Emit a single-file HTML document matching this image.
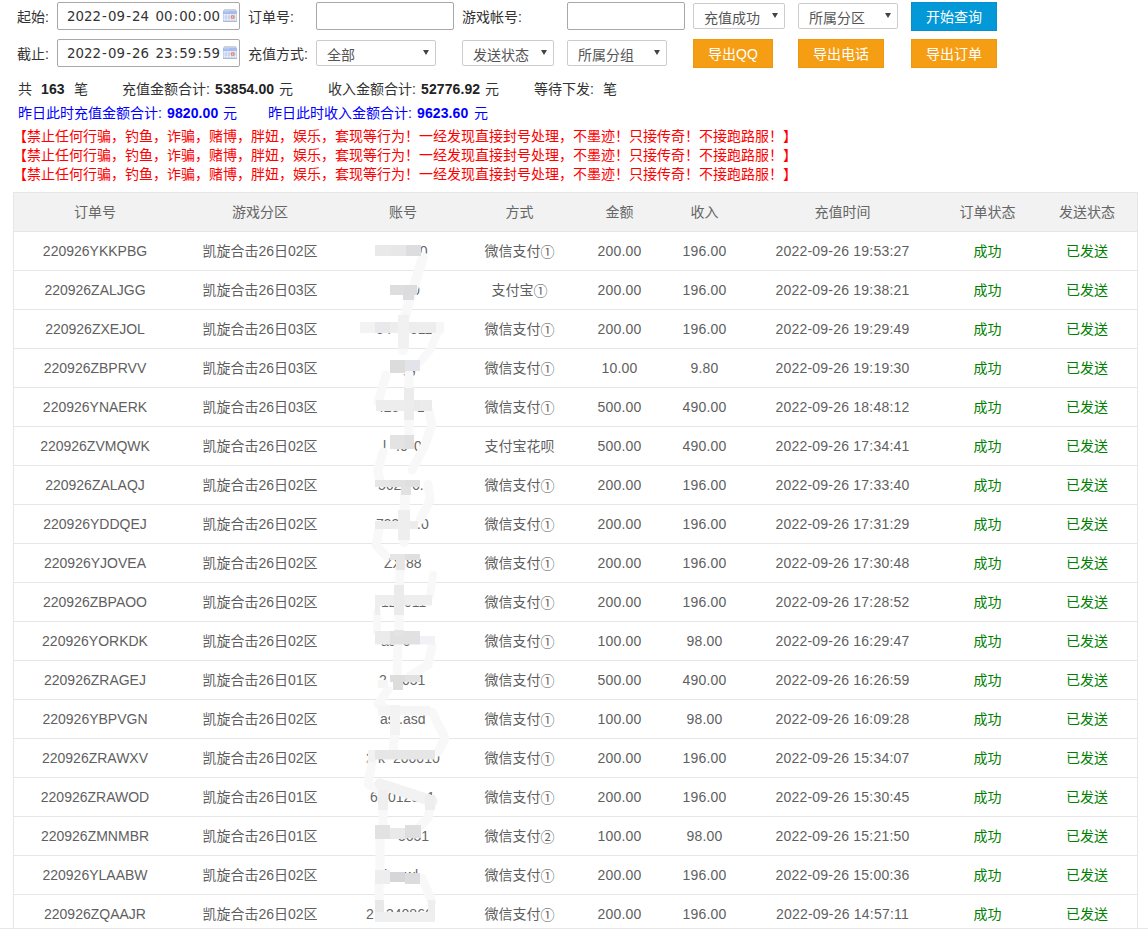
<!DOCTYPE html>
<html lang="zh-CN">
<head>
<meta charset="utf-8">
<title>充值订单</title>
<style>
*{box-sizing:border-box}
html,body{margin:0;padding:0;background:#fff}
body{width:1148px;height:938px;position:relative;overflow:hidden;font-family:"Liberation Sans","Noto Sans CJK SC",sans-serif;font-size:14px;color:#333}
.abs{position:absolute;white-space:nowrap}
.lb{position:absolute;white-space:nowrap;height:28px;line-height:30px;color:#333}
.inp{position:absolute;height:28px;border:1px solid #a9a7a7;border-radius:2px;background:#fff;font-family:"DejaVu Sans","Liberation Sans",sans-serif;font-size:13.33px;line-height:26px;padding-top:1px;padding-left:9px;color:#333;white-space:nowrap}
.inp u{text-decoration:none;padding:0 1.15px;white-space:pre}
.inp .cal{position:absolute;left:165px;top:6px}
.sel{position:absolute;height:26px;border:1px solid #ccc;border-radius:2px;background:#fff;line-height:29px;padding-left:10px;overflow:hidden;color:#555;white-space:nowrap}
.sel i{position:absolute;right:6px;top:9px;width:0;height:0;border-left:3px solid transparent;border-right:3px solid transparent;border-top:5.5px solid #444}
.btn{position:absolute;height:29px;line-height:28px;text-align:center;color:#fff;white-space:nowrap}
.or{background:#f59d13;border:1px solid #ef970f}
.bl{background:#0399d9;border:1px solid #068fcc}
.sum{position:absolute;left:13px;white-space:nowrap;height:20px;line-height:20px}
.sum span{position:absolute;top:0}
.red{color:#f00}
.blue{color:#00f}
b{font-weight:bold;color:#222;letter-spacing:.1px}
.blue b{color:#00f}
#tw{position:absolute;left:13px;top:192px;width:1125px;height:737px;border:1px solid #e6e6e6;border-bottom:none;overflow:hidden}
#hr{position:absolute;left:0;top:928px;width:1148px;height:1px;background:#e6e6e6}
table{border-collapse:separate;border-spacing:0;table-layout:fixed;width:1123px;color:#5f5f5f}
th,td{height:39px;padding:0;text-align:center;font-weight:normal;border-bottom:1px solid #e6e6e6;white-space:nowrap;overflow:hidden;line-height:38px}
th{background:#f2f2f2;color:#666}
td.g{color:#008000}
td.dt{letter-spacing:.22px}
td.n{letter-spacing:.2px}
td i{font-style:normal;position:relative;top:1px}
</style>
</head>
<body>
<div class="lb" style="left:17px;top:2px">起始:</div>
<div class="inp" style="left:57px;top:2px;width:183px">2022<u>-</u>09<u>-</u>24<u> </u>00<u>:</u>00<u>:</u>00<svg class="cal" width="14" height="13" viewBox="0 0 14 13"><rect x="1" y="0" width="12" height="1.6" fill="#d0d1d4"/><rect x="0" y="1.5" width="14" height="3.8" fill="#a5bcef"/><rect x="1" y="2" width="5" height="1.2" fill="#b9cbf3"/><rect x="0" y="5" width="14" height="7.2" fill="#c3d3f0"/><rect x="0" y="11.8" width="14" height="1.2" fill="#adbccf"/><g fill="#fff" opacity=".45"><rect x="1" y="5.3" width="12" height="1.1"/><rect x="1" y="10.3" width="12" height="1.1"/><rect x="1.2" y="6.4" width="1.1" height="3.9"/><rect x="4" y="6.4" width="1.1" height="3.9"/><rect x="6.8" y="6.4" width="1.1" height="3.9"/><rect x="12" y="6.4" width="1.1" height="3.9"/></g><g fill="#fff" opacity=".85"><rect x="1.2" y="5.3" width="1.1" height="1.1"/><rect x="4.0" y="5.3" width="1.1" height="1.1"/><rect x="6.8" y="5.3" width="1.1" height="1.1"/><rect x="9.6" y="5.3" width="1.1" height="1.1"/><rect x="12.0" y="5.3" width="1.1" height="1.1"/><rect x="1.2" y="10.3" width="1.1" height="1.1"/><rect x="4.0" y="10.3" width="1.1" height="1.1"/><rect x="6.8" y="10.3" width="1.1" height="1.1"/><rect x="9.6" y="10.3" width="1.1" height="1.1"/><rect x="12.0" y="10.3" width="1.1" height="1.1"/></g><circle cx="9.7" cy="7.9" r="1.95" fill="#e8856a"/><rect x="9.4" y="6.8" width=".7" height="2.2" fill="#fbe3da"/></svg></div>
<div class="lb" style="left:248px;top:2px">订单号:</div>
<div class="inp" style="left:316px;top:2px;width:138px"></div>
<div class="lb" style="left:462px;top:2px">游戏帐号:</div>
<div class="inp" style="left:567px;top:2px;width:118px"></div>
<div class="sel" style="left:693px;top:3px;width:92px">充值成功<i></i></div>
<div class="sel" style="left:798px;top:3px;width:100px">所属分区<i></i></div>
<div class="btn bl" style="left:911px;top:2px;width:86px">开始查询</div>

<div class="lb" style="left:17px;top:39px">截止:</div>
<div class="inp" style="left:57px;top:39px;width:183px">2022<u>-</u>09<u>-</u>26<u> </u>23<u>:</u>59<u>:</u>59<svg class="cal" width="14" height="13" viewBox="0 0 14 13"><rect x="1" y="0" width="12" height="1.6" fill="#d0d1d4"/><rect x="0" y="1.5" width="14" height="3.8" fill="#a5bcef"/><rect x="1" y="2" width="5" height="1.2" fill="#b9cbf3"/><rect x="0" y="5" width="14" height="7.2" fill="#c3d3f0"/><rect x="0" y="11.8" width="14" height="1.2" fill="#adbccf"/><g fill="#fff" opacity=".45"><rect x="1" y="5.3" width="12" height="1.1"/><rect x="1" y="10.3" width="12" height="1.1"/><rect x="1.2" y="6.4" width="1.1" height="3.9"/><rect x="4" y="6.4" width="1.1" height="3.9"/><rect x="6.8" y="6.4" width="1.1" height="3.9"/><rect x="12" y="6.4" width="1.1" height="3.9"/></g><g fill="#fff" opacity=".85"><rect x="1.2" y="5.3" width="1.1" height="1.1"/><rect x="4.0" y="5.3" width="1.1" height="1.1"/><rect x="6.8" y="5.3" width="1.1" height="1.1"/><rect x="9.6" y="5.3" width="1.1" height="1.1"/><rect x="12.0" y="5.3" width="1.1" height="1.1"/><rect x="1.2" y="10.3" width="1.1" height="1.1"/><rect x="4.0" y="10.3" width="1.1" height="1.1"/><rect x="6.8" y="10.3" width="1.1" height="1.1"/><rect x="9.6" y="10.3" width="1.1" height="1.1"/><rect x="12.0" y="10.3" width="1.1" height="1.1"/></g><circle cx="9.7" cy="7.9" r="1.95" fill="#e8856a"/><rect x="9.4" y="6.8" width=".7" height="2.2" fill="#fbe3da"/></svg></div>
<div class="lb" style="left:248px;top:39px">充值方式:</div>
<div class="sel" style="left:316px;top:40px;width:120px">全部<i></i></div>
<div class="sel" style="left:462px;top:40px;width:92px">发送状态<i></i></div>
<div class="sel" style="left:567px;top:40px;width:100px">所属分组<i></i></div>
<div class="btn or" style="left:693px;top:39px;width:80px">导出QQ</div>
<div class="btn or" style="left:798px;top:39px;width:86px">导出电话</div>
<div class="btn or" style="left:911px;top:39px;width:86px">导出订单</div>

<div class="sum" style="top:79px"><span style="left:5px">共</span><span style="left:28px"><b>163</b></span><span style="left:61px">笔</span><span style="left:109px">充值金额合计:</span><span style="left:202px"><b>53854.00</b></span><span style="left:266px">元</span><span style="left:315px">收入金额合计:</span><span style="left:408px"><b>52776.92</b></span><span style="left:472px">元</span><span style="left:521px">等待下发:</span><span style="left:590px">笔</span></div>
<div class="sum blue" style="top:103px"><span style="left:5px">昨日此时充值金额合计:</span><span style="left:154px"><b>9820.00</b></span><span style="left:210px">元</span><span style="left:255px">昨日此时收入金额合计:</span><span style="left:404px"><b>9623.60</b></span><span style="left:461px">元</span></div>
<div class="sum red" style="top:126px">【禁止任何行骗，钓鱼，诈骗，赌博，胖妞，娱乐，套现等行为！一经发现直接封号处理，不墨迹！只接传奇！不接跑路服！】</div>
<div class="sum red" style="top:145px">【禁止任何行骗，钓鱼，诈骗，赌博，胖妞，娱乐，套现等行为！一经发现直接封号处理，不墨迹！只接传奇！不接跑路服！】</div>
<div class="sum red" style="top:164px">【禁止任何行骗，钓鱼，诈骗，赌博，胖妞，娱乐，套现等行为！一经发现直接封号处理，不墨迹！只接传奇！不接跑路服！】</div>
<div id="tw"><table><colgroup><col style="width:162px"><col style="width:168px"><col style="width:118px"><col style="width:115px"><col style="width:85px"><col style="width:85px"><col style="width:191px"><col style="width:99px"><col style="width:100px"></colgroup>
<thead><tr><th>订单号</th><th>游戏分区</th><th>账号</th><th>方式</th><th>金额</th><th>收入</th><th>充值时间</th><th>订单状态</th><th>发送状态</th></tr></thead><tbody>
<tr><td>220926YKKPBG</td><td>凯旋合击26日02区</td><td class="ac"></td><td>微信支付<i>①</i></td><td class="n">200.00</td><td class="n">196.00</td><td class="dt">2022-09-26 19:53:27</td><td class="g">成功</td><td class="g">已发送</td></tr>
<tr><td>220926ZALJGG</td><td>凯旋合击26日03区</td><td class="ac"></td><td>支付宝<i>①</i></td><td class="n">200.00</td><td class="n">196.00</td><td class="dt">2022-09-26 19:38:21</td><td class="g">成功</td><td class="g">已发送</td></tr>
<tr><td>220926ZXEJOL</td><td>凯旋合击26日03区</td><td class="ac"></td><td>微信支付<i>①</i></td><td class="n">200.00</td><td class="n">196.00</td><td class="dt">2022-09-26 19:29:49</td><td class="g">成功</td><td class="g">已发送</td></tr>
<tr><td>220926ZBPRVV</td><td>凯旋合击26日03区</td><td class="ac"></td><td>微信支付<i>①</i></td><td class="n">10.00</td><td class="n">9.80</td><td class="dt">2022-09-26 19:19:30</td><td class="g">成功</td><td class="g">已发送</td></tr>
<tr><td>220926YNAERK</td><td>凯旋合击26日03区</td><td class="ac"></td><td>微信支付<i>①</i></td><td class="n">500.00</td><td class="n">490.00</td><td class="dt">2022-09-26 18:48:12</td><td class="g">成功</td><td class="g">已发送</td></tr>
<tr><td>220926ZVMQWK</td><td>凯旋合击26日02区</td><td class="ac"></td><td>支付宝花呗</td><td class="n">500.00</td><td class="n">490.00</td><td class="dt">2022-09-26 17:34:41</td><td class="g">成功</td><td class="g">已发送</td></tr>
<tr><td>220926ZALAQJ</td><td>凯旋合击26日02区</td><td class="ac"></td><td>微信支付<i>①</i></td><td class="n">200.00</td><td class="n">196.00</td><td class="dt">2022-09-26 17:33:40</td><td class="g">成功</td><td class="g">已发送</td></tr>
<tr><td>220926YDDQEJ</td><td>凯旋合击26日02区</td><td class="ac"></td><td>微信支付<i>①</i></td><td class="n">200.00</td><td class="n">196.00</td><td class="dt">2022-09-26 17:31:29</td><td class="g">成功</td><td class="g">已发送</td></tr>
<tr><td>220926YJOVEA</td><td>凯旋合击26日02区</td><td class="ac"></td><td>微信支付<i>①</i></td><td class="n">200.00</td><td class="n">196.00</td><td class="dt">2022-09-26 17:30:48</td><td class="g">成功</td><td class="g">已发送</td></tr>
<tr><td>220926ZBPAOO</td><td>凯旋合击26日02区</td><td class="ac"></td><td>微信支付<i>①</i></td><td class="n">200.00</td><td class="n">196.00</td><td class="dt">2022-09-26 17:28:52</td><td class="g">成功</td><td class="g">已发送</td></tr>
<tr><td>220926YORKDK</td><td>凯旋合击26日02区</td><td class="ac"></td><td>微信支付<i>①</i></td><td class="n">100.00</td><td class="n">98.00</td><td class="dt">2022-09-26 16:29:47</td><td class="g">成功</td><td class="g">已发送</td></tr>
<tr><td>220926ZRAGEJ</td><td>凯旋合击26日01区</td><td class="ac"></td><td>微信支付<i>①</i></td><td class="n">500.00</td><td class="n">490.00</td><td class="dt">2022-09-26 16:26:59</td><td class="g">成功</td><td class="g">已发送</td></tr>
<tr><td>220926YBPVGN</td><td>凯旋合击26日02区</td><td class="ac"></td><td>微信支付<i>①</i></td><td class="n">100.00</td><td class="n">98.00</td><td class="dt">2022-09-26 16:09:28</td><td class="g">成功</td><td class="g">已发送</td></tr>
<tr><td>220926ZRAWXV</td><td>凯旋合击26日02区</td><td class="ac"></td><td>微信支付<i>①</i></td><td class="n">200.00</td><td class="n">196.00</td><td class="dt">2022-09-26 15:34:07</td><td class="g">成功</td><td class="g">已发送</td></tr>
<tr><td>220926ZRAWOD</td><td>凯旋合击26日01区</td><td class="ac"></td><td>微信支付<i>①</i></td><td class="n">200.00</td><td class="n">196.00</td><td class="dt">2022-09-26 15:30:45</td><td class="g">成功</td><td class="g">已发送</td></tr>
<tr><td>220926ZMNMBR</td><td>凯旋合击26日01区</td><td class="ac"></td><td>微信支付<i>②</i></td><td class="n">100.00</td><td class="n">98.00</td><td class="dt">2022-09-26 15:21:50</td><td class="g">成功</td><td class="g">已发送</td></tr>
<tr><td>220926YLAABW</td><td>凯旋合击26日02区</td><td class="ac"></td><td>微信支付<i>①</i></td><td class="n">200.00</td><td class="n">196.00</td><td class="dt">2022-09-26 15:00:36</td><td class="g">成功</td><td class="g">已发送</td></tr>
<tr><td>220926ZQAAJR</td><td>凯旋合击26日02区</td><td class="ac"></td><td>微信支付<i>①</i></td><td class="n">200.00</td><td class="n">196.00</td><td class="dt">2022-09-26 14:57:11</td><td class="g">成功</td><td class="g">已发送</td></tr></tbody></table></div>
<div id="hr"></div>
<svg id="ov" width="1148" height="938" viewBox="0 0 1148 938" style="position:absolute;left:0;top:0;pointer-events:none">
<g font-family="Liberation Sans, sans-serif" font-size="14" fill="#666">
<text x="412" y="256">20</text>
<text x="412" y="295">0</text>
<text x="376" y="334">54</text>
<text x="410" y="334">511</text>
<text x="395" y="373">ng</text>
<text x="408" y="373">g</text>
<text x="376" y="412">425</text>
<text x="417" y="412">1</text>
<text x="383" y="451">l</text>
<text x="396" y="451">.0</text>
<text x="414" y="451">0</text>
<text x="378" y="490">562</text>
<text x="412" y="490">6.</text>
<text x="376" y="529">799</text>
<text x="417" y="529">.0</text>
<text x="384" y="568">ZX</text>
<text x="406" y="568">88</text>
<text x="381" y="607">12</text>
<text x="404" y="607">011</text>
<text x="381" y="646">as</text>
<text x="403" y="646">c</text>
<text x="379" y="685">2</text>
<text x="402" y="685">051</text>
<text x="380" y="724">as</text>
<text x="399" y="724">.asd</text>
<text x="366" y="763">2</text>
<text x="378" y="763">k</text>
<text x="393" y="763">200010</text>
<text x="370" y="802">6</text>
<text x="388" y="802">012c</text>
<text x="427" y="802">1</text>
<text x="398" y="841">5651</text>
<text x="384" y="880">j</text>
<text x="397" y="880">awl</text>
<text x="366" y="919">2</text>
<text x="386" y="919">340866</text>
</g>
<g fill="none" stroke-linecap="round" stroke-linejoin="round">
<path d="M423 257 L410 299 L404 320 L403 350" stroke="#f8f8f8" stroke-width="10"/>
<path d="M438 332 L430 350 L420 362" stroke="#f8f8f8" stroke-width="8"/>
<path d="M386 375 L378 402" stroke="#f8f8f8" stroke-width="9"/>
<path d="M409 374 L409 436" stroke="#f8f8f8" stroke-width="9"/>
<path d="M428 408 L432 425 L425 445 L412 470" stroke="#f8f8f8" stroke-width="9"/>
<path d="M383 452 L378 470 L380 482" stroke="#f8f8f8" stroke-width="9"/>
<path d="M405 494 L404 542" stroke="#f8f8f8" stroke-width="10"/>
<path d="M428 484 L430 500 L420 520" stroke="#f8f8f8" stroke-width="9"/>
<path d="M379 530 L376 545 L386 556" stroke="#f8f8f8" stroke-width="9"/>
<path d="M400 570 L399 598" stroke="#f8f8f8" stroke-width="9"/>
<path d="M433 575 L430 596" stroke="#f8f8f8" stroke-width="8"/>
<path d="M377 612 L377 632" stroke="#f8f8f8" stroke-width="8"/>
<path d="M399 612 L399 632" stroke="#f8f8f8" stroke-width="9"/>
<path d="M432 646 L428 665 L410 676" stroke="#f8f8f8" stroke-width="9"/>
<path d="M398 646 L397 676" stroke="#f8f8f8" stroke-width="9"/>
<path d="M388 690 L378 704 L392 712" stroke="#f8f8f8" stroke-width="9"/>
<path d="M395 730 L393 752" stroke="#f8f8f8" stroke-width="9"/>
<path d="M432 712 L445 738 L438 752" stroke="#f8f8f8" stroke-width="9"/>
<path d="M372 762 L368 784 L382 792" stroke="#f8f8f8" stroke-width="9"/>
<path d="M380 784 L432 801" stroke="#f2f2f2" stroke-width="11"/>
<path d="M383 808 L383 828" stroke="#f8f8f8" stroke-width="9"/>
<path d="M430 808 L428 818 L418 828" stroke="#f8f8f8" stroke-width="9"/>
<path d="M380 840 L380 872" stroke="#f8f8f8" stroke-width="9"/>
<path d="M422 878 L432 902" stroke="#f8f8f8" stroke-width="9"/>
<path d="M379 884 L379 902" stroke="#f8f8f8" stroke-width="9"/>
</g>
<rect x="375" y="245" width="16" height="11" fill="#e9e9e9"/>
<rect x="391" y="245" width="15" height="11" fill="#e7e7e7"/>
<rect x="406" y="245" width="15" height="11" fill="#dddde0"/>
<rect x="390" y="285" width="14" height="10" fill="#dedede"/>
<rect x="404" y="285" width="13" height="10" fill="#dcdcde"/>
<rect x="403" y="295" width="11" height="5" fill="#dddddf"/>
<rect x="360" y="322" width="15" height="11" fill="#f3f3f3"/>
<rect x="375" y="322" width="15" height="11" fill="#e9e9eb"/>
<rect x="390" y="322" width="46" height="11" fill="#ededed"/>
<rect x="436" y="322" width="8" height="11" fill="#f6f6f6"/>
<rect x="398" y="315" width="11" height="34" fill="#f1f1f1"/>
<rect x="390" y="360" width="15" height="13" fill="#dddcdc"/>
<rect x="405" y="360" width="15" height="11" fill="#e3e3ea"/>
<rect x="376" y="400" width="29" height="11" fill="#ededed"/>
<rect x="405" y="400" width="15" height="11" fill="#e9e9e9"/>
<rect x="420" y="400" width="12" height="11" fill="#ebebeb"/>
<rect x="404" y="388" width="10" height="32" fill="#ececec"/>
<rect x="390" y="435" width="15" height="14" fill="#e3e3e3"/>
<rect x="405" y="435" width="9" height="14" fill="#e0e0e0"/>
<rect x="375" y="480" width="15" height="7" fill="#e6e6e6"/>
<rect x="390" y="480" width="15" height="7" fill="#e2e2e2"/>
<rect x="405" y="480" width="15" height="7" fill="#dfdfe1"/>
<rect x="401" y="487" width="10" height="8" fill="#e2e2e2"/>
<rect x="375" y="521" width="43" height="8" fill="#ececec"/>
<rect x="398" y="510" width="12" height="30" fill="#eeeeee"/>
<rect x="390" y="554" width="15" height="6" fill="#e6e6e6"/>
<rect x="405" y="554" width="15" height="6" fill="#dfdfdf"/>
<rect x="396" y="560" width="9" height="10" fill="#e6e6e6"/>
<rect x="375" y="595" width="57" height="10.5" fill="#eeeeee"/>
<rect x="375" y="605" width="5" height="10" fill="#eeeeee"/>
<rect x="394" y="585" width="10" height="30" fill="#ebebeb"/>
<rect x="375" y="631" width="15" height="13.5" fill="#ebebeb"/>
<rect x="390" y="631" width="30" height="13.5" fill="#e1e1e1"/>
<rect x="420" y="636" width="15" height="8.5" fill="#f0f2f5"/>
<rect x="394" y="630" width="10" height="6" fill="#e4e4e4"/>
<rect x="378" y="680" width="10" height="8" fill="#f6f6f6"/>
<rect x="390" y="675" width="15" height="7" fill="#dddddd"/>
<rect x="405" y="675" width="15" height="7" fill="#e1e1e3"/>
<rect x="393" y="682" width="10" height="8" fill="#dddddd"/>
<rect x="378" y="706" width="52" height="9.5" fill="#f5f5f5"/>
<rect x="390" y="705" width="10" height="30" fill="#f3f3f3"/>
<rect x="375" y="750" width="60" height="9.5" fill="#e6e6e6"/>
<rect x="368" y="750" width="7" height="12" fill="#f2f2f2"/>
<rect x="378" y="790" width="10" height="20" fill="#efefef"/>
<rect x="425" y="795" width="10" height="15" fill="#eeeeee"/>
<rect x="375" y="825" width="15" height="14" fill="#e2e2e2"/>
<rect x="390" y="828" width="15" height="11" fill="#e9e9e9"/>
<rect x="405" y="825" width="16" height="13" fill="#dedee0"/>
<rect x="375" y="870" width="15" height="14" fill="#eeeeee"/>
<rect x="390" y="872" width="15" height="10" fill="#d6d6d9"/>
<rect x="405" y="873" width="15" height="11" fill="#dcdcde"/>
<rect x="375" y="900" width="9" height="15" fill="#e8e8e8"/>
<rect x="375" y="912" width="60" height="10" fill="#efefef"/>
<rect x="428" y="900" width="7" height="15" fill="#eeeeee"/>
</svg></body></html>
